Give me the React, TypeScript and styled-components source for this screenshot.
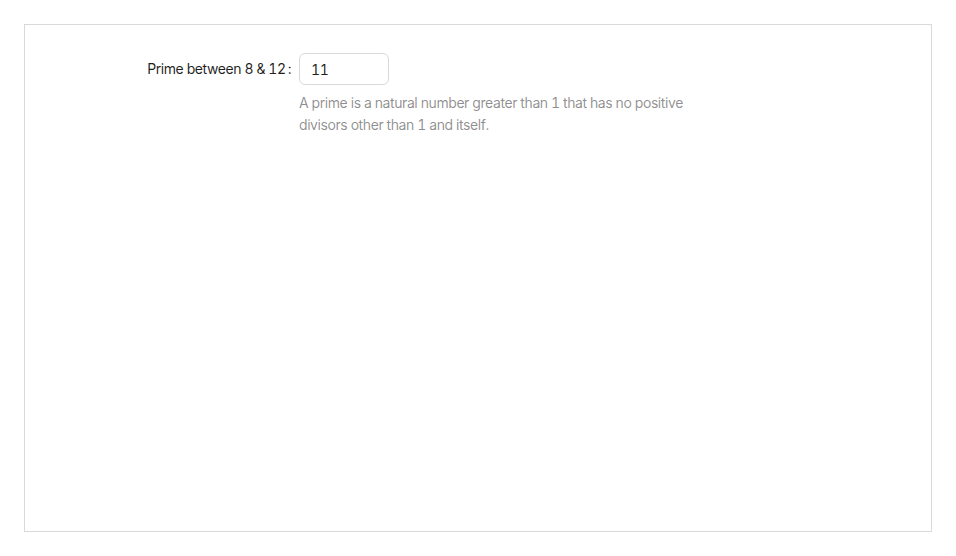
import React from "react";
import styled, { createGlobalStyle } from "styled-components";

const Global = createGlobalStyle`
  html, body { margin: 0; padding: 0; background: #fff; }
  body {
    margin: 8px;
    font-family: Inter, "Noto Sans", sans-serif;
    font-variant: tabular-nums;
    font-feature-settings: "tnum";
    letter-spacing: -0.42px;
  }
  * { box-sizing: border-box; }
`;

const Page = styled.div`
  padding: 16px;
`;

const Panel = styled.div`
  border: 1px solid #d9d9d9;
  height: 508px;
  padding-top: 28px;
`;

const FormRow = styled.div`
  display: flex;
  align-items: flex-start;
`;

const LabelCol = styled.div`
  width: 274px;
  flex: none;
  display: flex;
  justify-content: flex-end;
  align-items: center;
  height: 32px;
`;

const Label = styled.label`
  font-size: 14px;
  color: rgba(0, 0, 0, 0.88);
  line-height: 22px;
  &::after {
    content: ":";
    margin-inline-start: 2px;
    margin-inline-end: 8px;
  }
`;

const ControlCol = styled.div`
  display: flex;
  flex-direction: column;
`;

const Input = styled.input`
  width: 90px;
  height: 32px;
  padding: 4px 11px;
  border: 1px solid #d9d9d9;
  border-radius: 6px;
  font-family: inherit;
  font-size: 14px;
  line-height: 22px;
  letter-spacing: inherit;
  color: rgba(0, 0, 0, 0.88);
  font-feature-settings: "tnum";
  outline: none;
  background: #fff;
`;

const Help = styled.div`
  font-size: 14px;
  line-height: 22px;
  color: rgba(0, 0, 0, 0.45);
  max-width: 400px;
  margin-top: 7px;
`;

export default function App() {
  return (
    <>
      <Global />
      <Page>
        <Panel>
          <FormRow>
            <LabelCol>
              <Label htmlFor="prime">Prime between 8 &amp; 12</Label>
            </LabelCol>
            <ControlCol>
              <Input id="prime" defaultValue="11" />
              <Help>
                A prime is a natural number greater than 1 that has no positive
                divisors other than 1 and itself.
              </Help>
            </ControlCol>
          </FormRow>
        </Panel>
      </Page>
    </>
  );
}
